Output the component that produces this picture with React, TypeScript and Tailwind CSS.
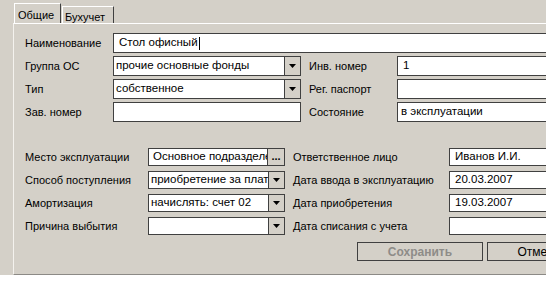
import React from "react";

const font = { fontFamily: '"Liberation Sans", Arial, sans-serif' };

function Arrow() {
  return (
    <div className="flex w-[16px] shrink-0 items-center justify-center border-l border-[#404040] bg-[#d4d0c8]">
      <svg width="7" height="4" viewBox="0 0 7 4">
        <path d="M0 0h7L3.5 4z" fill="#000" />
      </svg>
    </div>
  );
}

function Field({ value, w, caret }: { value?: string; w: string; caret?: boolean }) {
  return (
    <div className={`flex h-full items-center border border-[#404040] bg-white pl-[3px] text-[11.5px] text-black ${w}`}>
      <span className="whitespace-nowrap">{value}</span>
      {caret && <span className="ml-[1px] inline-block h-[13px] w-px bg-black" />}
    </div>
  );
}

function Select({ value, w }: { value?: string; w: string }) {
  return (
    <div className={`flex h-full border border-[#404040] bg-white ${w}`}>
      <div className="flex flex-1 items-center overflow-hidden whitespace-nowrap pl-[2px] text-[11.5px]">{value}</div>
      <Arrow />
    </div>
  );
}

export default function App() {
  const bottom = [
    { label: "Место эксплуатации", value: "Основное подразделение", kind: "dots", rl: "Ответственное лицо", rv: "Иванов И.И." },
    { label: "Способ поступления", value: "приобретение за плату", kind: "sel", rl: "Дата ввода в эксплуатацию", rv: "20.03.2007" },
    { label: "Амортизация", value: "начислять: счет 02", kind: "sel", rl: "Дата приобретения", rv: "19.03.2007" },
    { label: "Причина выбытия", value: "", kind: "sel", rl: "Дата списания с учета", rv: "" },
  ];

  return (
    <div className="h-[287px] w-[560px] bg-white" style={font}>
      <div className="flex h-[275px] w-[546px] flex-col overflow-hidden bg-[#d4d0c8] text-[11px] text-black">
        {/* tabs */}
        <div className="flex h-[23px] shrink-0 items-end pl-[14px]">
          <div className="flex h-[20px] w-[47px] items-start border-l border-t border-r border-l-white border-t-white border-r-[#404040] pl-[3px] pt-[3px] text-[11px]">
            Общие
          </div>
          <div className="ml-[1px] flex h-[17px] w-[52px] items-start border-l border-t border-r border-l-white border-t-white border-r-[#404040] pl-[2px] pt-[2px] text-[11px]">
            Бухучет
          </div>
        </div>

        {/* panel */}
        <div className="ml-[13px] flex w-[600px] flex-1 flex-col border-l border-t border-b border-l-[#f4f2ee] border-t-white border-b-[#8c8a86] pl-[11px] pt-[9px]">
          <div className="flex flex-col gap-[3px]">
            <div className="flex h-[20px] items-center">
              <div className="w-[88px]">Наименование</div>
              <Field value="Стол офисный" w="w-[460px] pl-[5px]" caret />
            </div>
            <div className="flex h-[20px] items-center">
              <div className="w-[88px]">Группа ОС</div>
              <Select value="прочие основные фонды" w="w-[188px]" />
              <div className="ml-[8px] w-[88px]">Инв. номер</div>
              <Field value="1" w="w-[200px] pl-[5px]" />
            </div>
            <div className="flex h-[20px] items-center">
              <div className="w-[88px]">Тип</div>
              <Select value="собственное" w="w-[188px]" />
              <div className="ml-[8px] w-[88px]">Рег. паспорт</div>
              <Field w="w-[200px]" />
            </div>
            <div className="flex h-[20px] items-center">
              <div className="w-[88px]">Зав. номер</div>
              <Field w="w-[188px]" />
              <div className="ml-[8px] w-[88px]">Состояние</div>
              <Field value="в эксплуатации" w="w-[200px]" />
            </div>
          </div>

          <div className="mt-[26px] flex flex-col gap-[5px]">
            {bottom.map((r) => (
              <div key={r.label} className="flex h-[18px] items-center">
                <div className="w-[123px]">{r.label}</div>
                {r.kind === "dots" ? (
                  <div className="flex h-full w-[137px] border border-[#404040] bg-white">
                    <div className="flex flex-1 items-center overflow-hidden whitespace-nowrap pl-[4px] text-[11.5px]">{r.value}</div>
                    <div className="flex w-[17px] shrink-0 items-end justify-center border-l border-[#404040] bg-[#d4d0c8] pb-[3px] text-[11px] font-bold leading-none">
                      ...
                    </div>
                  </div>
                ) : (
                  <Select value={r.value} w="w-[137px]" />
                )}
                <div className="ml-[8px] w-[156px]">{r.rl}</div>
                <Field value={r.rv} w="w-[150px] pl-[5px]" />
              </div>
            ))}
          </div>

          <div className="mt-[7px] flex h-[19px] gap-[4px] pl-[332px]">
            <div className="flex w-[126px] items-center justify-center border border-[#404040] bg-[#d4d0c8] text-[12px] font-bold text-[#8e8c88]">
              Сохранить
            </div>
            <div className="flex w-[104px] items-center justify-center border border-[#404040] bg-[#d4d0c8] text-[12px]">
              Отмена
            </div>
          </div>
        </div>
      </div>
    </div>
  );
}
